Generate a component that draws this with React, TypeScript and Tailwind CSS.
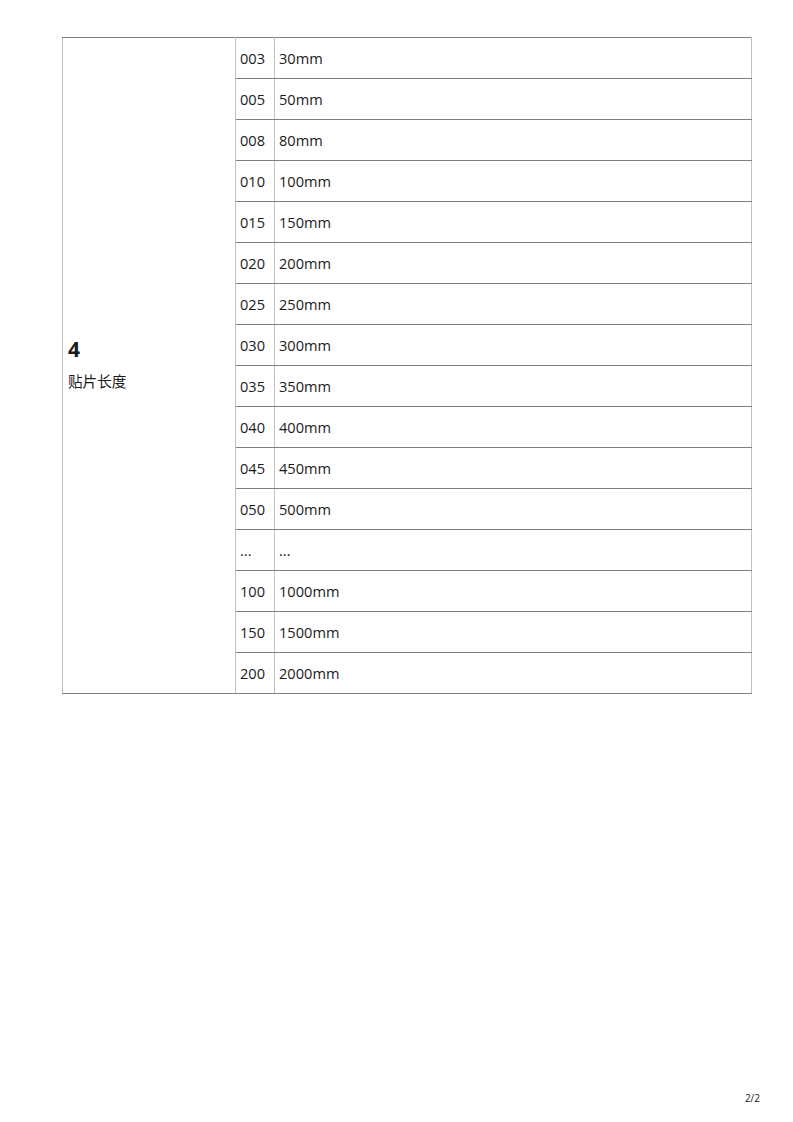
import React from "react";

const rows: [string, string][] = [
  ["003", "30mm"],
  ["005", "50mm"],
  ["008", "80mm"],
  ["010", "100mm"],
  ["015", "150mm"],
  ["020", "200mm"],
  ["025", "250mm"],
  ["030", "300mm"],
  ["035", "350mm"],
  ["040", "400mm"],
  ["045", "450mm"],
  ["050", "500mm"],
  ["...", "..."],
  ["100", "1000mm"],
  ["150", "1500mm"],
  ["200", "2000mm"],
];

export default function App() {
  return (
    <div
      className="relative w-[793px] h-[1122px] bg-white text-[#1a1a1a]"
      style={{ fontFamily: '"Open Sans", "Noto Sans CJK SC", sans-serif' }}
    >
      <div className="pt-[37px] pl-[62px]">
        <table className="border-collapse w-[690px] text-[14.6px]">
          <tbody>
            {rows.map(([code, len], i) => (
              <tr key={code + i} className="h-[41px]">
                {i === 0 && (
                  <td
                    rowSpan={rows.length}
                    className="w-[173px] align-middle border-y border-y-[#7f7f7f] border-x border-x-[#c0c0c0] px-[5px]"
                  >
                    <div className="text-[21px] font-bold leading-[28px]">4</div>
                    <div className="mt-[8px] mb-[6px] text-[14.6px] leading-[20px]">贴片长度</div>
                  </td>
                )}
                <td className="w-[39px] border-y border-y-[#7f7f7f] border-x border-x-[#c0c0c0] pl-[4px] pr-[2px] leading-[20px] align-middle">
                  {code}
                </td>
                <td className="border-y border-y-[#7f7f7f] border-x border-x-[#c0c0c0] pl-[4px] leading-[20px] align-middle">
                  {len}
                </td>
              </tr>
            ))}
          </tbody>
        </table>
      </div>
      <div className="absolute right-[33px] top-[1092px] text-[10px] leading-[12px]">2/2</div>
    </div>
  );
}
